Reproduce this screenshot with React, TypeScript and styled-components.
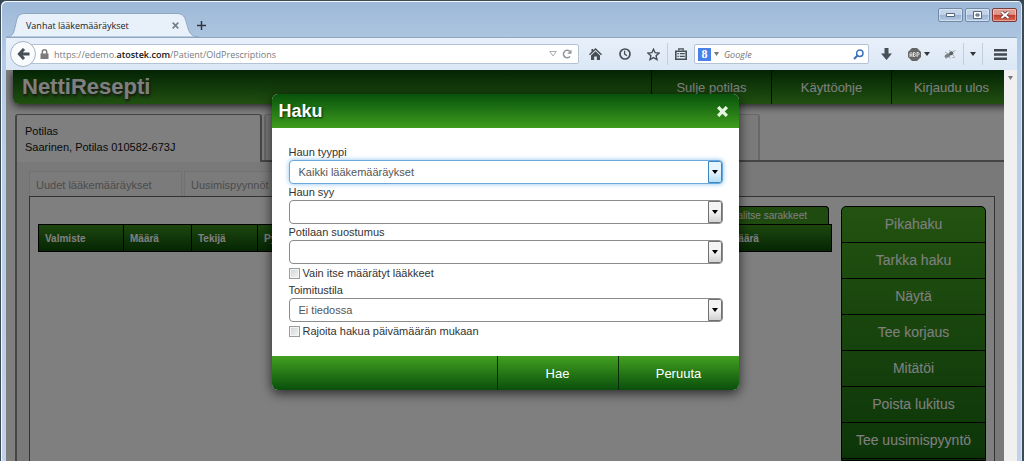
import React from "react";
import styled, { createGlobalStyle, css } from "styled-components";

const sans = `"Liberation Sans", Arial, Helvetica, sans-serif`;
const chrome = `"Open Sans", "Segoe UI", sans-serif`;

const GlobalStyle = createGlobalStyle`
  *, *::before, *::after { box-sizing: border-box; }
  body { margin: 0; background: #33434f; }
  button, input, select { font: inherit; margin: 0; }
  ul { list-style: none; margin: 0; padding: 0; }
  a { color: inherit; text-decoration: none; }
`;

/* ---------- Browser window ---------- */

const Window = styled.div`
  display: flex;
  flex-direction: column;
  height: 100vh;
  min-height: 400px;
  overflow: hidden;
  border: 2px solid #3c4a55;
  border-width: 1px 2px 0 1px;
  border-radius: 6px 6px 0 0;
  background: linear-gradient(#9db8d8, #a9c3df 30px, #b6cce6 60px, #c2d2ea);
  box-shadow: inset 1px 1px 0 #f4f8fc, inset -1px 0 0 #c5ecfa;
  font-family: ${chrome};
`;

const TitleBar = styled.div`
  display: flex;
  align-items: flex-end;
  flex: none;
  height: 36px;
  padding: 0 5px 0 15px;
`;

const Tab = styled.div`
  position: relative;
  display: flex;
  align-items: center;
  justify-content: space-between;
  width: 173px;
  height: 24px;
  padding: 0 10px 0 10px;
  font-size: 9px;
  color: #1a1a1a;
`;

const TabShape = styled.svg`
  position: absolute;
  top: 0;
  left: -10px;
  width: 193px;
  height: 24px;
`;

const TabTitle = styled.span`
  position: relative;
`;

const PlainButton = styled.button`
  position: relative;
  display: flex;
  align-items: center;
  justify-content: center;
  flex: none;
  border: 0;
  padding: 0;
  background: none;
  color: #4a5258;
`;

const CloseTab = styled(PlainButton)`
  color: #777f88;
`;

const NewTab = styled(PlainButton)`
  width: 24px;
  height: 24px;
  color: #30363c;
`;

const WindowButtons = styled.div`
  display: flex;
  gap: 2px;
  margin-left: auto;
  align-self: flex-start;
  padding-top: 7px;
`;

const WindowButton = styled.button<{ $danger?: boolean }>`
  display: flex;
  align-items: center;
  justify-content: center;
  width: 25px;
  height: 14px;
  padding: 0;
  border: 1px solid ${(p) => (p.$danger ? "#7c3a3a" : "#7289a6")};
  border-radius: 2px;
  box-shadow: inset 0 0 0 1px rgba(255, 255, 255, 0.4);
  background: ${(p) =>
    p.$danger
      ? "linear-gradient(#e09a8e 45%, #c2392b 50%, #d56c50)"
      : "linear-gradient(#c2d4ea 45%, #9ab3d2 50%, #b4cbe4)"};
`;

const Toolbar = styled.div`
  display: flex;
  align-items: center;
  flex: none;
  height: 33px;
  margin: 0 5px;
  padding-left: 4px;
  border-top: 1px solid #8fa6c0;
  background: linear-gradient(#e8f0fa, #dbe7f5);
`;

const BackButton = styled(PlainButton)`
  width: 26px;
  height: 26px;
  border: 1px solid #a5b3c4;
  border-radius: 50%;
  background: #f9fbfd;
  z-index: 1;
`;

const UrlBox = styled.div`
  display: flex;
  align-items: center;
  flex: 1;
  height: 20px;
  margin-left: -6px;
  padding: 0 5px 0 9px;
  border: 1px solid #b3c2d4;
  border-radius: 2px;
  background: #fff;
  font-size: 9px;
  color: #777a7e;
`;

const UrlText = styled.span`
  flex: 1;
  margin-left: 5px;
  b { color: #111; font-weight: 600; }
`;

const SearchBox = styled.label`
  display: flex;
  align-items: center;
  width: 175px;
  height: 20px;
  padding: 0 4px 0 3px;
  border: 1px solid #b3c2d4;
  border-radius: 2px;
  background: #fff;
`;

const SearchInput = styled.input`
  flex: 1;
  min-width: 0;
  padding: 0;
  margin-left: 5px;
  border: 0;
  outline: 0;
  background: none;
  font-size: 9px;
  font-style: italic;
  &::placeholder { color: #777; opacity: 1; }
`;

const GoogleMark = styled.span`
  width: 13px;
  height: 13px;
  margin-right: 3px;
  background: #4a80ea;
  color: #fff;
  font: 700 12px/13px "Liberation Serif", serif;
  text-align: center;
`;

const ToolButton = styled(PlainButton)<{ $w: number }>`
  gap: 3px;
  width: ${(p) => p.$w}px;
  height: 22px;
`;

const Rule = styled.span`
  width: 1px;
  height: 22px;
  background: #c3cfdd;
`;

const Viewport = styled.div`
  display: flex;
  flex: 1;
  min-height: 0;
  margin: 0 5px;
`;

const ScrollTrack = styled.div`
  display: flex;
  justify-content: center;
  flex: none;
  width: 13px;
  padding-top: 6px;
  background: #f0f0f0;
`;

/* ---------- Application page ---------- */

const Page = styled.div`
  position: relative;
  flex: 1;
  min-width: 0;
  display: flex;
  flex-direction: column;
  overflow: hidden;
  background: #fff;
  font-family: ${sans};
`;

const AppHeader = styled.header`
  display: flex;
  flex: none;
  height: 34px;
  margin: 0 -7px 10px 7px;
  padding-left: 9px;
  border-radius: 0 0 0 6px;
  background: linear-gradient(#084808, #42a022);
  box-shadow: 0 2px 8px rgba(0, 0, 0, 0.8);
  color: #fff;
`;

const Brand = styled.h1`
  flex: 1;
  margin: 0;
  font-size: 22px;
  line-height: 34px;
  text-shadow: 1px 2px 3px #222;
`;

const HeaderLink = styled.a`
  width: 120px;
  border-left: 1px solid #021f02;
  font-size: 13px;
  line-height: 35px;
  text-align: center;
`;

const PatientTabs = styled.div`
  display: flex;
  align-items: flex-end;
  flex: none;
  margin-left: 9px;
`;

const PatientTab = styled.div`
  width: 247px;
  height: 48px;
  padding: 8px 8px 0 8px;
  border: solid #8a8a8a;
  border-width: 1px 2px 0 2px;
  border-radius: 3px 3px 0 0;
  font-size: 11px;
  line-height: 16px;
  color: #111;
`;

const SpareTab = styled.div`
  width: 498px;
  height: 48px;
  padding: 0 0 0 2px;
  border-bottom: 2px solid #8a8a8a;
  &::before {
    content: "";
    display: block;
    height: 46px;
    border: solid #d0d0d0;
    border-width: 1px 2px 0;
    border-radius: 3px 3px 0 0;
    background: #f4f4f4;
  }
`;

const TabsFill = styled.div`
  flex: 1;
  border-bottom: 2px solid #8a8a8a;
`;

const Workspace = styled.div`
  display: flex;
  flex-direction: column;
  flex: 1;
  min-height: 0;
  margin-left: 9px;
  padding: 9px 9px 0 12px;
  border-left: 2px solid #8a8a8a;
  background: #f2f2f2;
`;

const SubTabs = styled.nav`
  display: flex;
  gap: 2px;
`;

const SubTab = styled.a`
  width: 153px;
  height: 25px;
  padding-left: 6px;
  border: 1px solid #e2e2e2;
  border-bottom: 0;
  background: #f6f6f6;
  font-size: 11px;
  line-height: 26px;
  color: #999;
`;

const Panel = styled.section`
  display: flex;
  gap: 9px;
  flex: 1;
  min-height: 0;
  padding: 9px 8px 0 8px;
  border: solid #666;
  border-width: 1px 1px 0;
  background: #fff;
`;

const Results = styled.div`
  display: flex;
  flex-direction: column;
  align-items: flex-end;
  flex: 1;
`;

const ColumnPicker = styled.button`
  height: 18px;
  margin-right: 3px;
  padding: 0 21px 0 18px;
  border: 1px solid #000;
  border-bottom: 0;
  border-radius: 4px 4px 0 0;
  background: #3f9420;
  color: #fff;
  font-size: 10px;
  line-height: 16px;
`;

const Table = styled.table`
  width: 100%;
  table-layout: fixed;
  border-collapse: collapse;
  background: linear-gradient(#3a8f1e, #0a4a08);
  color: #fff;
`;

const HeadCell = styled.th<{ $w?: number }>`
  width: ${(p) => (p.$w ? `${p.$w}px` : "auto")};
  height: 27px;
  padding: 0 6px;
  border: 1px solid #000;
  font-size: 10px;
  text-align: left;
`;

const Actions = styled.ul`
  width: 145px;
  border: 1px solid #000;
  border-radius: 5px 5px 0 0;
  background: linear-gradient(#46a522, #1c6e14 240px, #186410);
  overflow: hidden;
`;

const Action = styled.button`
  width: 100%;
  height: 36px;
  padding: 0;
  border: 0;
  border-bottom: 1px solid #000;
  background: none;
  color: #fff;
  font-size: 14px;
  line-height: 35px;
`;

/* ---------- Search dialog ---------- */

const Overlay = styled.div`
  position: absolute;
  inset: 0;
  display: flex;
  justify-content: center;
  align-items: flex-start;
  padding-top: 24px;
  background: rgba(0, 0, 0, 0.5);
`;

const Dialog = styled.form`
  width: 467px;
  border-radius: 6px;
  overflow: hidden;
  background: #fff;
  box-shadow: 0 3px 12px rgba(0, 0, 0, 0.7);
  color: #333;
  font-size: 11px;
`;

const DialogHeader = styled.header`
  display: flex;
  align-items: center;
  justify-content: space-between;
  height: 34px;
  padding: 0 10px 0 7px;
  background: linear-gradient(#07520b, #3f9c1e);
  color: #fff;
`;

const DialogTitle = styled.h2`
  margin: 0;
  font-size: 18px;
  text-shadow: 1px 1px 2px #042b04;
`;

const CloseButton = styled(PlainButton)`
  width: 12px;
  height: 12px;
  color: #e6f5e0;
`;

const DialogBody = styled.div`
  padding: 16px 16px 16px 17px;
`;

const Field = styled.label`
  display: block;
  line-height: 16px;
`;

const SelectFrame = styled.span<{ $active?: boolean }>`
  position: relative;
  display: flex;
  height: 24px;
  border: 1px solid #8c8c8c;
  border-radius: 4px;
  overflow: hidden;
  background: #fff;
  ${(p) =>
    p.$active &&
    css`
      border-color: #6aa9dd;
      box-shadow: 0 0 5px #8cc2f0;
    `}
`;

const Select = styled.select`
  flex: 1;
  appearance: none;
  padding: 0 22px 0 9px;
  border: 0;
  outline: 0;
  background: none;
  color: #555;
`;

const SelectArrow = styled.span<{ $active?: boolean }>`
  position: absolute;
  inset: 0 0 0 auto;
  display: flex;
  align-items: center;
  justify-content: center;
  width: 14px;
  border: 1px solid ${(p) => (p.$active ? "#3c86c0" : "#707070")};
  border-radius: 0 2px 2px 0;
  background: ${(p) =>
    p.$active
      ? "linear-gradient(#e6f5fd 50%, #b5def7)"
      : "linear-gradient(#f3f3f3 50%, #d2d2d2)"};
  pointer-events: none;
`;

const CheckRow = styled.label`
  display: flex;
  align-items: center;
  gap: 3px;
  height: 18px;
`;

const CheckBox = styled.input`
  appearance: none;
  width: 11px;
  height: 11px;
  border: 1px solid #9c9d9d;
  background: linear-gradient(135deg, #cfd2d6, #f6f6f6);
  box-shadow: inset 0 0 0 1px #f4f4f4;
`;

const DialogFooter = styled.footer`
  display: flex;
  justify-content: flex-end;
  height: 34px;
  background: linear-gradient(#42a020, #0a4f0c);
`;

const FooterButton = styled.button`
  width: 121px;
  padding: 0;
  border: 0;
  border-left: 1px solid #032d04;
  background: none;
  color: #fff;
  font-size: 13px;
`;

/* ---------- Icons ---------- */

const Caret = ({ w = 7, color = "#333" }: { w?: number; color?: string }) => (
  <svg width={w} height="4" viewBox="0 0 8 4" preserveAspectRatio="none" aria-hidden="true">
    <path d="M0 0h8L4 4z" fill={color} />
  </svg>
);

const BackIcon = () => (
  <svg width="13" height="12" viewBox="0 0 13 12" fill="none" stroke="#454d55" strokeWidth="3">
    <path d="M7 1L2.4 6L7 11M3 6h9.5" />
  </svg>
);

const LockIcon = () => (
  <svg width="9" height="10" viewBox="0 0 9 10">
    <path d="M2.3 5V3a2.2 2.2 0 0 1 4.4 0v2" fill="none" stroke="#7b7b7b" strokeWidth="1.5" />
    <path d="M.5 4.5h8V10h-8z" fill="#7b7b7b" />
  </svg>
);

const ReloadIcon = () => (
  <svg width="10" height="10" viewBox="0 0 10 10">
    <path d="M8 7.4A3.7 3.7 0 1 1 7.6 2.3" fill="none" stroke="#8f959b" strokeWidth="1.5" />
    <path d="M9.5.5v4.2H5.3z" fill="#8f959b" />
  </svg>
);

const HomeIcon = () => (
  <svg width="13" height="12" viewBox="0 0 13 12" fill="#474e55">
    <path d="M6.5 0L13 6.2l-1 1L6.5 2.1L1 7.2l-1-1L2.5 3.8V1h1.6v1.3z" />
    <path d="M6.5 3.2L11 7.4V12H7.8V8.5H5.2V12H2V7.4z" />
  </svg>
);

const ClockIcon = () => (
  <svg width="12" height="12" viewBox="0 0 12 12" fill="none" stroke="#474e55" strokeWidth="1.7">
    <circle cx="6" cy="6" r="5" />
    <path d="M5.6 2.8v3.4L8 7.6" strokeWidth="1.3" />
  </svg>
);

const StarIcon = () => (
  <svg width="13" height="13" viewBox="0 0 13 13" fill="none" stroke="#474e55" strokeWidth="1.4">
    <path d="M6.5 1.2L8.100 4.700L12 5.100L9.100 7.700L10 11.600L6.500 9.600L3 11.600L3.900 7.700L1 5.100L4.900 4.700z" />
  </svg>
);

const ListIcon = () => (
  <svg width="12" height="12" viewBox="0 0 12 12" fill="none" stroke="#474e55">
    <path d="M.8 3.2h10.4v8H.8z" strokeWidth="1.6" />
    <path d="M3.8 2.6V.8h4.4v1.8" strokeWidth="1.3" />
    <path d="M2.4 5.6h1.4M4.8 5.6h5M2.4 8.4h1.4M4.8 8.4h5" strokeWidth="1.2" />
  </svg>
);

const MagnifierIcon = () => (
  <svg width="11" height="11" viewBox="0 0 11 11" fill="none" stroke="#3d74bd">
    <circle cx="6.8" cy="4.2" r="3.2" strokeWidth="1.5" />
    <path d="M4.5 6.5L1 10" strokeWidth="2.2" />
  </svg>
);

const DownloadIcon = () => (
  <svg width="11" height="12" viewBox="0 0 11 12">
    <path d="M3.5 0h4v5.5H11L5.5 12L0 5.5h3.5z" fill="#474e55" />
  </svg>
);

const AbpIcon = () => (
  <svg width="13" height="13" viewBox="0 0 13 13">
    <path d="M4 0h5l4 4v5l-4 4H4L0 9V4z" fill="#666" />
    <path
      d="M2 9V5.5L3 4.4l1 1.100V9M2 7h2M5.500 4.500h1.300l.7.8-.7 1.200.7 1-.7 1H5.500zM9 9V4.500h1.400l.6.8v.9l-.6.8H9"
      fill="none"
      stroke="#eee"
      strokeWidth=".9"
    />
  </svg>
);

const BugIcon = () => (
  <svg width="13" height="11" viewBox="0 0 13 11" fill="none">
    <ellipse cx="4.600" cy="6.600" rx="3.200" ry="1.800" transform="rotate(-25 4.600 6.600)" fill="#7b7f83" />
    <circle cx="8.300" cy="4.200" r="2" fill="#5c6064" />
    <path d="M2 3l3 2M6.500 1l1 2M3 10l.8-2.200M7 9.500l-.6-2.500M11.500 7.500L9.400 5.600M10 2.600l2.400-1M9.500 8.500h2" stroke="#9a9ea2" strokeWidth=".9" />
  </svg>
);

const MenuIcon = () => (
  <svg width="13" height="11" viewBox="0 0 13 11">
    <path d="M0 1.3h13M0 5.5h13M0 9.7h13" stroke="#40474e" strokeWidth="2.4" />
  </svg>
);

const Cross = ({ size, width }: { size: number; width: number }) => (
  <svg width={size} height={size} viewBox="0 0 10 10" aria-hidden="true">
    <path d="M1 1l8 8M9 1L1 9" stroke="currentColor" strokeWidth={width} />
  </svg>
);

/* ---------- Composition ---------- */

const actions = [
  "Pikahaku",
  "Tarkka haku",
  "Näytä",
  "Tee korjaus",
  "Mitätöi",
  "Poista lukitus",
  "Tee uusimispyyntö",
];

function SelectField({ label, value, active }: { label: string; value?: string; active?: boolean }) {
  return (
    <Field>
      {label}
      <SelectFrame $active={active}>
        <Select defaultValue={value ?? ""}>
          <option>{value ?? ""}</option>
        </Select>
        <SelectArrow $active={active}>
          <Caret w={6} color="#000" />
        </SelectArrow>
      </SelectFrame>
    </Field>
  );
}

function Check({ label }: { label: string }) {
  return (
    <CheckRow>
      <CheckBox type="checkbox" />
      {label}
    </CheckRow>
  );
}

function BrowserChrome() {
  return (
    <>
      <TitleBar>
        <Tab>
          <TabShape viewBox="0 0 193 24">
            <path
              d="M0 24C8 24 8 18 10 10C11.500 3 13 .5 19 .5H171C177 .5 179 4 180.500 10C183 19 184 23.500 193 24z"
              fill="#e8f0fa"
              stroke="#8fa6c0"
            />
          </TabShape>
          <TabTitle>Vanhat lääkemääräykset</TabTitle>
          <CloseTab aria-label="Sulje välilehti">
            <Cross size={7} width={2.4} />
          </CloseTab>
        </Tab>
        <NewTab aria-label="Uusi välilehti">
          <svg width="9" height="9" viewBox="0 0 9 9">
            <path d="M4.500 0v9M0 4.500h9" stroke="currentColor" strokeWidth="1.500" />
          </svg>
        </NewTab>
        <WindowButtons>
          <WindowButton aria-label="Pienennä">
            <svg width="9" height="4"><path d="M.5.5h8v3h-8z" fill="#fff" stroke="#56657a" /></svg>
          </WindowButton>
          <WindowButton aria-label="Suurenna">
            <svg width="9" height="8">
              <path d="M.5.5h8v7h-8z" fill="#fff" stroke="#56657a" />
              <path d="M3 3h3v2H3z" fill="#9ab3d2" stroke="#56657a" />
            </svg>
          </WindowButton>
          <WindowButton $danger aria-label="Sulje">
            <svg width="10" height="8" viewBox="0 0 10 8">
              <path d="M1.500 1l7 6M8.500 1l-7 6" stroke="#5d3a40" strokeWidth="3.600" />
              <path d="M1.500 1l7 6M8.500 1l-7 6" stroke="#fff" strokeWidth="2" />
            </svg>
          </WindowButton>
        </WindowButtons>
      </TitleBar>
      <Toolbar>
        <BackButton aria-label="Takaisin"><BackIcon /></BackButton>
        <UrlBox>
          <LockIcon />
          <UrlText>https://edemo.<b>atostek.com</b>/Patient/OldPrescriptions</UrlText>
          <ToolButton $w={16} aria-label="Historia">
            <svg width="8" height="6"><path d="M.7.5h6.600L4 5z" fill="none" stroke="#a8adb3" /></svg>
          </ToolButton>
          <ToolButton $w={12} aria-label="Lataa uudelleen"><ReloadIcon /></ToolButton>
        </UrlBox>
        <ToolButton $w={32} aria-label="Koti"><HomeIcon /></ToolButton>
        <ToolButton $w={28} aria-label="Selaushistoria"><ClockIcon /></ToolButton>
        <ToolButton $w={28} aria-label="Lisää kirjanmerkki"><StarIcon /></ToolButton>
        <Rule />
        <ToolButton $w={26} aria-label="Kirjanmerkit"><ListIcon /></ToolButton>
        <SearchBox>
          <GoogleMark>8</GoogleMark>
          <Caret w={5} color="#777" />
          <SearchInput placeholder="Google" aria-label="Google" />
          <MagnifierIcon />
        </SearchBox>
        <ToolButton $w={34} aria-label="Lataukset"><DownloadIcon /></ToolButton>
        <ToolButton $w={32} aria-label="Adblock"><AbpIcon /><Caret w={6} /></ToolButton>
        <ToolButton $w={28} aria-label="Firebug"><BugIcon /></ToolButton>
        <Rule />
        <ToolButton $w={18} aria-label="Firebug-valikko"><Caret w={6} /></ToolButton>
        <Rule />
        <ToolButton $w={34} aria-label="Valikko"><MenuIcon /></ToolButton>
      </Toolbar>
    </>
  );
}

function SearchDialog() {
  return (
    <Overlay>
      <Dialog role="dialog" aria-labelledby="haku" onSubmit={(e) => e.preventDefault()}>
        <DialogHeader>
          <DialogTitle id="haku">Haku</DialogTitle>
          <CloseButton type="button" aria-label="Sulje"><Cross size={11} width={3} /></CloseButton>
        </DialogHeader>
        <DialogBody>
          <SelectField label="Haun tyyppi" value="Kaikki lääkemääräykset" active />
          <SelectField label="Haun syy" />
          <SelectField label="Potilaan suostumus" />
          <Check label="Vain itse määrätyt lääkkeet" />
          <SelectField label="Toimitustila" value="Ei tiedossa" />
          <Check label="Rajoita hakua päivämäärän mukaan" />
        </DialogBody>
        <DialogFooter>
          <FooterButton>Hae</FooterButton>
          <FooterButton type="button">Peruuta</FooterButton>
        </DialogFooter>
      </Dialog>
    </Overlay>
  );
}

export default function App() {
  return (
    <>
      <GlobalStyle />
      <Window>
        <BrowserChrome />
        <Viewport>
          <Page>
            <AppHeader>
              <Brand>NettiResepti</Brand>
              <HeaderLink href="#sulje">Sulje potilas</HeaderLink>
              <HeaderLink href="#ohje">Käyttöohje</HeaderLink>
              <HeaderLink href="#ulos">Kirjaudu ulos</HeaderLink>
            </AppHeader>
            <PatientTabs>
              <PatientTab>
                Potilas
                <br />
                Saarinen, Potilas 010582-673J
              </PatientTab>
              <SpareTab />
              <TabsFill />
            </PatientTabs>
            <Workspace>
              <SubTabs>
                <SubTab href="#uudet">Uudet lääkemääräykset</SubTab>
                <SubTab href="#uusimis">Uusimispyynnöt</SubTab>
              </SubTabs>
              <Panel>
                <Results>
                  <ColumnPicker>Valitse sarakkeet</ColumnPicker>
                  <Table>
                    <thead>
                      <tr>
                        <HeadCell $w={85}>Valmiste</HeadCell>
                        <HeadCell $w={68}>Määrä</HeadCell>
                        <HeadCell $w={66}>Tekijä</HeadCell>
                        <HeadCell>Py</HeadCell>
                        <HeadCell $w={108}>Määrä</HeadCell>
                      </tr>
                    </thead>
                  </Table>
                </Results>
                <Actions>
                  {actions.map((name) => (
                    <li key={name}><Action>{name}</Action></li>
                  ))}
                </Actions>
              </Panel>
            </Workspace>
            <SearchDialog />
          </Page>
          <ScrollTrack><Caret w={5} color="#777" /></ScrollTrack>
        </Viewport>
      </Window>
    </>
  );
}
